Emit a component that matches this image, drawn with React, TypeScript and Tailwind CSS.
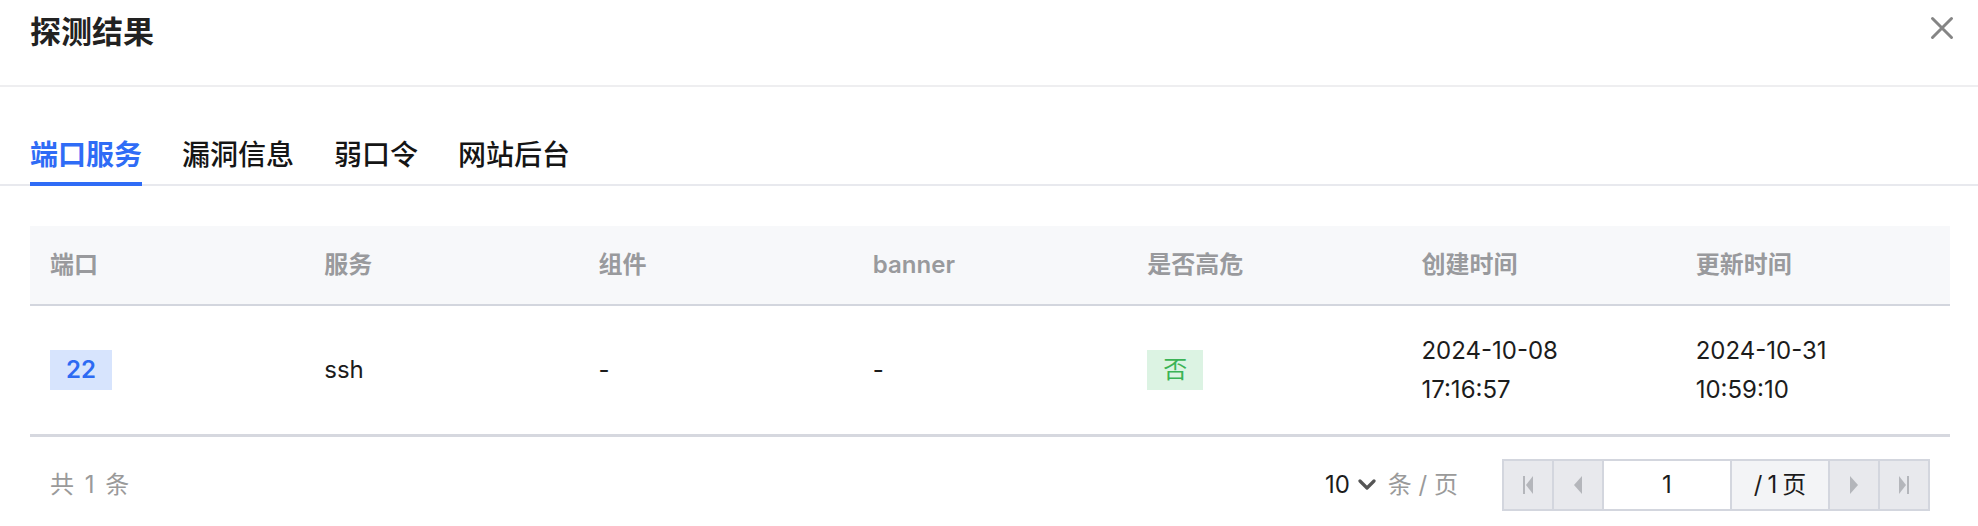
import React from 'react';

const TABS = ['端口服务', '漏洞信息', '弱口令', '网站后台'];
const COLUMNS = ['端口', '服务', '组件', 'banner', '是否高危', '创建时间', '更新时间'];

const CloseIcon = () => (
  <svg width="24" height="24" viewBox="0 0 24 24" fill="none">
    <path d="M2.5 2.5L21.5 21.5M21.5 2.5L2.5 21.5" stroke="#858585" strokeWidth="3" strokeLinecap="round" />
  </svg>
);

const PageIcon = ({ kind }: { kind: 'first' | 'prev' | 'next' | 'last' }) => (
  <svg width="12" height="20" viewBox="0 0 12 20" fill="#b4b6bb">
    {kind === 'first' && (
      <>
        <rect x="1" y="1" width="2" height="18" />
        <path d="M11 1L4 10L11 19Z" />
      </>
    )}
    {kind === 'prev' && <path d="M10 1L2 10L10 19Z" />}
    {kind === 'next' && <path d="M2 1L10 10L2 19Z" />}
    {kind === 'last' && (
      <>
        <path d="M1 1L8 10L1 19Z" />
        <rect x="9" y="1" width="2" height="18" />
      </>
    )}
  </svg>
);

export default function App() {
  return (
    <div className="w-[1978px] h-[526px] bg-white overflow-hidden font-[Inter,'Noto_Sans_CJK_SC',sans-serif] text-[#1d1d1f]">
      {/* Header */}
      <div className="h-[87px] border-b-2 border-[#eeeef0] pl-[30px] pr-[24px] flex items-start justify-between">
        <h1 className="mt-[12px] text-[31px] leading-[40px] font-semibold text-[#222]">探测结果</h1>
        <button className="mt-[16px]">
          <CloseIcon />
        </button>
      </div>

      {/* Tabs */}
      <div className="mt-[48px] border-b-2 border-[#e8e9ee] pl-[30px] flex gap-[40px]">
        {TABS.map((t, i) => (
          <div key={t} className="relative pb-[9px]">
            <span
              className={`text-[28px] leading-[40px] ${i === 0 ? 'text-[#2f6cf6] font-semibold' : 'text-[#151515] font-medium'}`}
            >
              {t}
            </span>
            {i === 0 && <div className="absolute left-0 right-0 bottom-[-2px] h-[4px] bg-[#2f6cf6]" />}
          </div>
        ))}
      </div>

      {/* Table */}
      <div className="mt-[40px] ml-[30px] w-[1920px]">
        <div className="grid grid-cols-7 h-[80px] items-center bg-[#f7f8fa] border-b-2 border-[#d3d6de]">
          {COLUMNS.map((c) => (
            <div key={c} className="pl-[20px] text-[24px] leading-[32px] font-semibold text-[#999a9d]">
              {c}
            </div>
          ))}
        </div>
        <div className="grid grid-cols-7 h-[131px] items-center border-b-[3px] border-[#d6d8df] text-[24px] text-[#1c1c1c]">
          <div className="pl-[20px]">
            <span className="inline-flex items-center justify-center w-[62px] h-[40px] bg-[#d7e4fd] text-[#2d6bf3] font-semibold">
              22
            </span>
          </div>
          <div className="pl-[20px]">ssh</div>
          <div className="pl-[20px]">-</div>
          <div className="pl-[20px]">-</div>
          <div className="pl-[20px]">
            <span className="inline-flex items-center justify-center w-[56px] h-[40px] bg-[#dcf3e3] text-[#3bb356]">
              否
            </span>
          </div>
          <div className="pl-[20px] leading-[39px]">
            2024-10-08
            <br />
            17:16:57
          </div>
          <div className="pl-[20px] leading-[39px]">
            2024-10-31
            <br />
            10:59:10
          </div>
        </div>

        {/* Footer */}
        <div className="flex items-center justify-between pl-[20px] pr-[20px] pt-[22px]">
          <span className="text-[24px] text-[#9a9a9a] tracking-[2px]">共 1 条</span>
          <div className="flex items-center">
            <div className="flex items-center gap-[8px] text-[24px]">
              <span className="text-[#1c1c1c]">10</span>
              <svg width="18" height="12" viewBox="0 0 18 12" fill="none">
                <path d="M2 2L9 9L16 2" stroke="#555" strokeWidth="3.2" strokeLinecap="round" strokeLinejoin="round" />
              </svg>
              <span className="text-[#9a9a9a] ml-[4px]">条 / 页</span>
            </div>
            <div className="ml-[44px] flex h-[52px] border-2 border-[#d3d6de] bg-[#d3d6de] gap-[2px]">
              <div className="w-[48px] bg-[#e8e9ed] flex items-center justify-center">
                <PageIcon kind="first" />
              </div>
              <div className="w-[48px] bg-[#e8e9ed] flex items-center justify-center">
                <PageIcon kind="prev" />
              </div>
              <div className="w-[126px] bg-white flex items-center justify-center text-[24px] text-[#1c1c1c]">1</div>
              <div className="w-[96px] bg-[#f3f4f6] flex items-center justify-center gap-[5px] text-[24px] text-[#1c1c1c]">
                <span>/</span>
                <span>1</span>
                <span>页</span>
              </div>
              <div className="w-[48px] bg-[#e8e9ed] flex items-center justify-center">
                <PageIcon kind="next" />
              </div>
              <div className="w-[48px] bg-[#e8e9ed] flex items-center justify-center">
                <PageIcon kind="last" />
              </div>
            </div>
          </div>
        </div>
      </div>
    </div>
  );
}
